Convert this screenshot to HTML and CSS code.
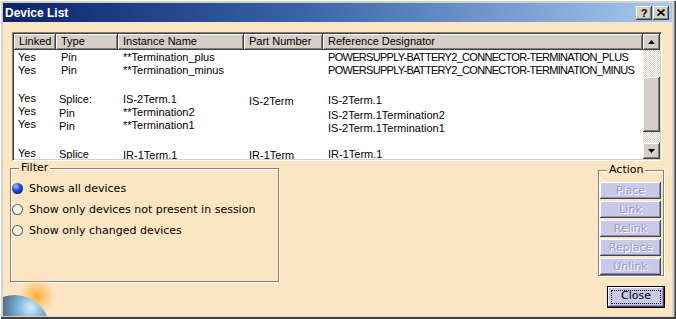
FILE: index.html
```html
<!DOCTYPE html>
<html lang="en">
<head>
  <meta charset="UTF-8">
  <title>Device List</title>
  <link rel="stylesheet" href="styles.css">
</head>
<body>
  <div class="window">
    <div class="titlebar">
      <span class="title">Device List</span>
      <div class="title-buttons">
        <span class="tbtn">?</span>
        <span class="tbtn">
          <svg width="8" height="7" viewBox="0 0 8 7"><path d="M0.5 0.5 L7.5 6.5 M7.5 0.5 L0.5 6.5" stroke="#000" stroke-width="1.6"/></svg>
        </span>
      </div>
    </div>
    <div class="client">
      <div class="listbox">
        <div class="list-main">
          <div class="list-head">
            <div class="hcell">Linked</div>
            <div class="hcell">Type</div>
            <div class="hcell">Instance Name</div>
            <div class="hcell">Part Number</div>
            <div class="hcell">Reference Designator</div>
          </div>
          <div class="list-body">
            <div class="row">
              <div class="cell lk">Yes</div>
              <div class="cell">Pin</div>
              <div class="cell">**Termination_plus</div>
              <div class="cell"></div>
              <div class="cell caps">POWERSUPPLY-BATTERY2_CONNECTOR-TERMINATION_PLUS</div>
            </div>
            <div class="row">
              <div class="cell lk">Yes</div>
              <div class="cell">Pin</div>
              <div class="cell">**Termination_minus</div>
              <div class="cell"></div>
              <div class="cell caps">POWERSUPPLY-BATTERY2_CONNECTOR-TERMINATION_MINUS</div>
            </div>
            <div class="row gap">
              <div class="cell lk">Yes</div>
              <div class="cell tight dn1">Splice:</div>
              <div class="cell dn1">IS-2Term.1</div>
              <div class="cell dn3">IS-2Term</div>
              <div class="cell dn2">IS-2Term.1</div>
            </div>
            <div class="row">
              <div class="cell lk">Yes</div>
              <div class="cell tight dn2">Pin</div>
              <div class="cell dn1">**Termination2</div>
              <div class="cell"></div>
              <div class="cell dn4">IS-2Term.1Termination2</div>
            </div>
            <div class="row">
              <div class="cell lk">Yes</div>
              <div class="cell tight dn2">Pin</div>
              <div class="cell dn1">**Termination1</div>
              <div class="cell"></div>
              <div class="cell dn4">IS-2Term.1Termination1</div>
            </div>
            <div class="row gap-lg">
              <div class="cell lk">Yes</div>
              <div class="cell tight dn1">Splice</div>
              <div class="cell dn2">IR-1Term.1</div>
              <div class="cell dn2">IR-1Term</div>
              <div class="cell dn1">IR-1Term.1</div>
            </div>
          </div>
        </div>
        <div class="scrollbar">
          <div class="sb-btn">
            <svg width="7" height="4" viewBox="0 0 7 4"><path d="M0 4 L3.5 0 L7 4 Z" fill="#000"/></svg>
          </div>
          <div class="sb-track"><div class="sb-thumb"></div></div>
          <div class="sb-btn">
            <svg width="7" height="4" viewBox="0 0 7 4"><path d="M0 0 L3.5 4 L7 0 Z" fill="#000"/></svg>
          </div>
        </div>
      </div>

      <div class="lower">
        <div class="group filter">
          <div class="group-title">Filter</div>
          <div class="radios">
            <div class="radio-row"><span class="radio checked"></span>Shows all devices</div>
            <div class="radio-row"><span class="radio"></span>Show only devices not present in session</div>
            <div class="radio-row"><span class="radio"></span>Show only changed devices</div>
          </div>
        </div>
        <div class="side">
          <div class="group action">
            <div class="group-title">Action</div>
            <div class="actions">
              <button class="abtn" disabled>Place</button>
              <button class="abtn" disabled>Link</button>
              <button class="abtn" disabled>Relink</button>
              <button class="abtn" disabled>Replace</button>
              <button class="abtn" disabled>Unlink</button>
            </div>
          </div>
          <button class="close"><span>Close</span></button>
        </div>
      </div>

      <svg class="planet" width="60" height="40" viewBox="0 0 60 40">
        <defs>
          <radialGradient id="glow">
            <stop offset="0" stop-color="#ff9a20" stop-opacity="0.85"/>
            <stop offset="0.6" stop-color="#ffb850" stop-opacity="0.4"/>
            <stop offset="1" stop-color="#ffd090" stop-opacity="0"/>
          </radialGradient>
          <radialGradient id="globe" cx="0.72" cy="0.18" r="0.85">
            <stop offset="0" stop-color="#d8eefc"/>
            <stop offset="0.22" stop-color="#7fb2d8"/>
            <stop offset="0.5" stop-color="#4a6680"/>
            <stop offset="1" stop-color="#1e2834"/>
          </radialGradient>
        </defs>
        <circle cx="34" cy="20" r="19" fill="url(#glow)"/>
        <circle cx="12" cy="54" r="35" fill="url(#globe)"/>
      </svg>
    </div>
  </div>
</body>
</html>
```

FILE: styles.css
```css
body {
  margin: 0;
  background: #d4d0c8;
  font-family: "Liberation Sans", Arial, sans-serif;
  font-size: 11px;
  color: #000;
}
.window {
  width: 676px;
  height: 319px;
  box-sizing: border-box;
  padding: 3px 4px 3px 3px;
  background: #d4d0c8;
  display: flex;
  flex-direction: column;
  box-shadow: inset 1px 1px 0 #fff, inset 0 -2px 0 #404040, inset -1px 0 0 #404040, inset -2px 0 0 #808080;
}
.titlebar {
  height: 19px;
  flex: none;
  display: flex;
  align-items: center;
  justify-content: space-between;
  padding: 0 3px 0 2px;
  background: linear-gradient(to right, #0a246a, #3a64a8 45%, #a6caf0);
}
.title {
  color: #fff;
  font-weight: bold;
  font-size: 12px;
}
.title-buttons {
  display: flex;
  gap: 1px;
}
.tbtn {
  width: 16px;
  height: 14px;
  box-sizing: border-box;
  display: flex;
  align-items: center;
  justify-content: center;
  background: #d4d0c8;
  font-weight: bold;
  font-size: 11px;
  box-shadow: inset -1px -1px 0 #404040, inset 1px 1px 0 #fff, inset -2px -2px 0 #808080;
}
.client {
  flex: 1;
  position: relative;
  display: flex;
  flex-direction: column;
  background: #fce5c3;
}

/* device list */
.listbox {
  margin: 10px 0 0 9px;
  width: 650px;
  height: 129px;
  box-sizing: border-box;
  display: flex;
  padding: 1px;
  background: #fff;
  border: 1px solid;
  border-color: #808080 #fff #fff #808080;
  box-shadow: inset 1px 1px 0 #404040, inset -1px -1px 0 #d4d0c8;
}
.list-main {
  width: 629px;
  overflow: hidden;
}
.list-head, .row {
  display: grid;
  grid-template-columns: 42px 62px 126px 79px 320px;
}
.hcell {
  height: 16px;
  line-height: 15px;
  padding-left: 5px;
  background: #d4d0c8;
  white-space: nowrap;
  overflow: hidden;
  box-shadow: inset -1px -1px 0 #404040, inset 1px 1px 0 #fff, inset -2px -2px 0 #808080;
}
.row {
  height: 13px;
  line-height: 13px;
}
.row:first-child { margin-top: 1px; }
.row.gap { margin-top: 15px; }
.row.gap-lg { margin-top: 16px; }
.cell {
  padding-left: 5px;
  white-space: nowrap;
}
.cell.lk { padding-left: 4px; }
.cell.tight { padding-left: 3px; }
.cell.caps { letter-spacing: -0.7px; }
.dn1 { padding-top: 1px; }
.dn2 { padding-top: 2px; }
.dn3 { padding-top: 3px; }
.dn4 { padding-top: 4px; }

.scrollbar {
  width: 17px;
  display: flex;
  flex-direction: column;
}
.sb-btn, .sb-thumb {
  background: #d4d0c8;
  box-shadow: inset -1px -1px 0 #404040, inset 1px 1px 0 #fff, inset -2px -2px 0 #808080;
}
.sb-btn {
  height: 16px;
  flex: none;
  display: flex;
  align-items: center;
  justify-content: center;
}
.sb-track {
  flex: 1;
  background: repeating-conic-gradient(#fff 0 25%, #d4d0c8 0 50%) 0 0 / 2px 2px;
}
.sb-thumb {
  margin-top: 27px;
  height: 55px;
}

/* lower part */
.lower {
  display: flex;
  justify-content: space-between;
  align-items: flex-start;
  padding: 0 7px;
}
.group {
  box-sizing: border-box;
  border: 1px solid #808080;
  box-shadow: 1px 1px 0 #fff, inset 1px 1px 0 #fff;
  font-family: "DejaVu Sans", Verdana, sans-serif;
  font-size: 11px;
}
.group-title {
  width: fit-content;
  margin: -8px 0 0 8px;
  padding: 0 2px;
  line-height: 14px;
  background: #fce5c3;
}
.filter {
  width: 269px;
  height: 114px;
  margin-top: 7px;
}
.radios {
  margin-top: 3px;
  padding-left: 1px;
}
.radio-row {
  height: 21px;
  display: flex;
  align-items: center;
  gap: 6px;
  white-space: nowrap;
}
.radio {
  width: 11px;
  height: 11px;
  border-radius: 50%;
  background: #fffbea;
  box-shadow: inset 0 0 0 1px #5a5a5a;
}
.radio.checked {
  background: radial-gradient(circle at 35% 30%, #a8c4ff 0, #2e5ce0 35%, #0c2a9a 70%, #061450 100%);
  box-shadow: 0 0 0 1px #f4e0c0;
}
.side {
  display: flex;
  flex-direction: column;
  align-items: flex-end;
}
.action {
  width: 66px;
  height: 106px;
  margin: 9px 1px 0 0;
}
.actions {
  display: flex;
  flex-direction: column;
  gap: 2px;
  margin: 5px 0 0 1px;
}
.abtn {
  width: 61px;
  height: 17px;
  padding: 0;
  border: none;
  font: 11px "DejaVu Sans", Verdana, sans-serif;
  color: #9c9cc8;
  text-shadow: 1px 1px 0 #fff;
  background: #c8c8e8;
  box-shadow: inset -1px -1px 0 #404060, inset 1px 1px 0 #fff, inset -2px -2px 0 #9090b4;
}
.close {
  width: 58px;
  height: 22px;
  margin-top: 10px;
  padding: 3px;
  border: 1px solid #000;
  font: 11px "DejaVu Sans", Verdana, sans-serif;
  color: #000;
  background: #c8c8e8;
  box-shadow: inset -1px -1px 0 #404060, inset 1px 1px 0 #fff, inset -2px -2px 0 #9090b4;
}
.close span {
  display: block;
  height: 100%;
  box-sizing: border-box;
  line-height: 12px;
  outline: 1px dotted #000;
  outline-offset: -1px;
}
.planet {
  position: absolute;
  left: 0;
  bottom: 0;
}
```
